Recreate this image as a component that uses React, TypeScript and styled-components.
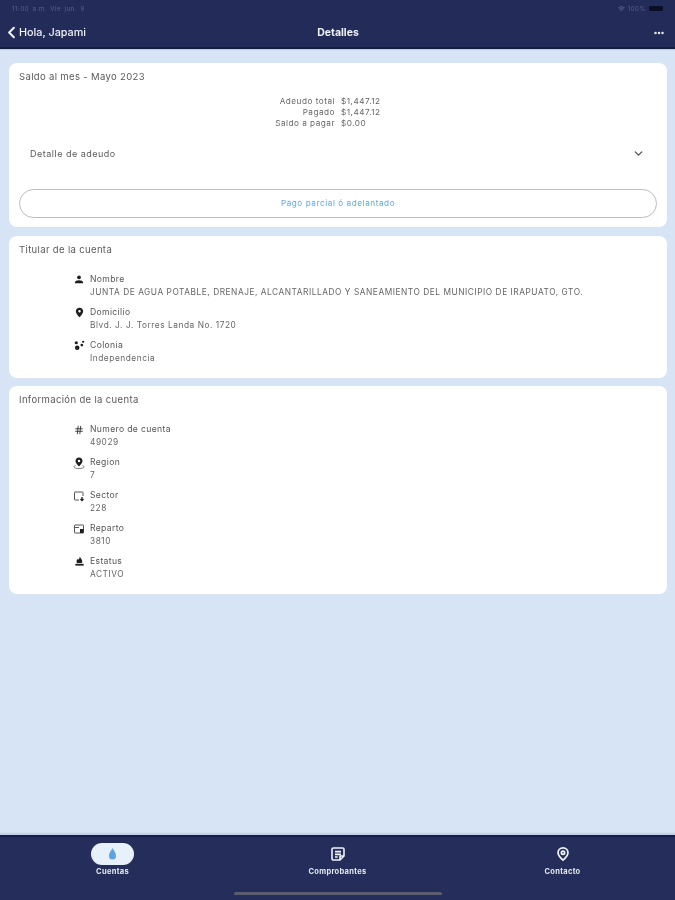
import React from 'react';
import styled, { createGlobalStyle } from 'styled-components';
import { ChevronDown, ChevronLeft, Ellipsis, Hash, Wifi } from 'lucide-react';

const GlobalStyle = createGlobalStyle`
  html, body {
    margin: 0;
    padding: 0;
    background: #d6e4f5;
  }
  * {
    box-sizing: border-box;
  }
`;

const PersonIcon = () => (
  <svg width="10" height="10" viewBox="0 0 24 24" fill="#1d1d1d">
    <circle cx="12" cy="8" r="4.5" />
    <path d="M2 21c0-4 5-6 10-6s10 2 10 6v1H2z" />
  </svg>
);

const PinIcon = () => (
  <svg width="11" height="11" viewBox="0 0 24 24" fill="#1d1d1d">
    <path d="M12 1.5c-4.600 0-8 3.500-8 8 0 5.500 8 13 8 13s8-7.500 8-13c0-4.500-3.400-8-8-8zm0 10.500a2.700 2.700 0 1 1 0-5.400 2.700 2.700 0 0 1 0 5.400z" />
  </svg>
);

const ScatterIcon = () => (
  <svg width="11" height="11" viewBox="0 0 24 24" fill="#1d1d1d">
    <circle cx="7" cy="17" r="5" />
    <circle cx="5" cy="6" r="3.500" />
    <circle cx="17" cy="11" r="3" />
    <circle cx="20" cy="4" r="2.500" />
  </svg>
);

const RegionIcon = () => (
  <svg width="12" height="12" viewBox="0 0 24 24" fill="#1d1d1d">
    <path d="M12 1c-4 0-7 3-7 7 0 4.500 7 11 7 11s7-6.500 7-11c0-4-3-7-7-7zm0 9.500a2.500 2.500 0 1 1 0-5 2.500 2.500 0 0 1 0 5z" />
    <path d="M5 17c-2 .8-3 1.700-3 2.800C2 22 7 23 12 23s10-1 10-3.200c0-1.100-1-2-3-2.800" fill="none" stroke="#555" strokeWidth="1.500" />
  </svg>
);

const SectorIcon = () => (
  <svg width="12" height="12" viewBox="0 0 24 24" fill="none" stroke="#444" strokeWidth="1.800">
    <path d="M12 20H4a1 1 0 0 1-1-1V5a1 1 0 0 1 1-1h15a1 1 0 0 1 1 1v7" />
    <path d="M18 14v7M15 18l3 3 3-3" stroke="#1d1d1d" strokeWidth="2.500" />
  </svg>
);

const RepartoIcon = () => (
  <svg width="12" height="12" viewBox="0 0 24 24" fill="none" stroke="#444" strokeWidth="1.800">
    <path d="M4 4h16a1 1 0 0 1 1 1v14a1 1 0 0 1-1 1H4a1 1 0 0 1-1-1V5a1 1 0 0 1 1-1z" />
    <path d="M3 9h9" />
    <rect x="14" y="12" width="7" height="8" fill="#1d1d1d" stroke="none" />
  </svg>
);

const StatusIcon = () => (
  <svg width="11" height="11" viewBox="0 0 24 24" fill="#1d1d1d">
    <path d="M13 1c.5 3.500 5 6 5 11 0 1.500-.6 2.500-1.500 3.500H7c-1-1-1.500-2-1.500-3.500 0-3 2-4 3-6 .5 1 1 1.500 2 2 .5-2 1.500-4.500 2.500-7z" />
    <path d="M3 17h18v4H3z" />
  </svg>
);

const DropIcon = () => (
  <svg width="13" height="14" viewBox="0 0 24 24" fill="#5ca4e0">
    <path d="M12 1c2.500 5 6.500 9 6.500 14.500a6.500 6.500 0 0 1-13 0C5.500 10 9.500 6 12 1z" />
  </svg>
);

const ReceiptIcon = () => (
  <svg width="16" height="16" viewBox="0 0 24 24" fill="none" stroke="#eef3fb" strokeWidth="2.400" strokeLinejoin="round">
    <path d="M5 3h14a2 2 0 0 1 2 2v10l-6 6H5a2 2 0 0 1-2-2V5a2 2 0 0 1 2-2z" />
    <path d="M7.500 8.500h9M7.500 12.500h9M7.500 16.500h4" />
    <path d="M15 21v-6h6" />
  </svg>
);

const ContactPinIcon = () => (
  <svg width="14" height="16" viewBox="0 0 24 26" fill="none" stroke="#eef3fb" strokeWidth="3">
    <path d="M12 2.500c-5 0-8.500 3.700-8.500 8.500 0 5.500 8.500 12.500 8.500 12.500S20.500 16.500 20.500 11c0-4.800-3.500-8.500-8.500-8.500z" />
    <circle cx="12" cy="11" r="2.800" />
  </svg>
);

const Page = styled.div`
  width: 675px;
  height: 900px;
  display: flex;
  flex-direction: column;
  background: #d6e4f5;
  font-family: Inter, "Liberation Sans", sans-serif;
  overflow: hidden;
  filter: blur(0.35px);
`;

const Header = styled.header`
  height: 49px;
  flex: none;
  background: #232c58;
  border-bottom: 2px solid #141c3f;
  box-shadow: 0 1px 1px #bccbe2;
`;

const StatusBar = styled.div`
  height: 17px;
  padding: 0 6px 0 12px;
  display: flex;
  align-items: center;
  justify-content: space-between;
  font-size: 6px;
  letter-spacing: 0.6px;
  color: #59618a;
`;

const StatusTime = styled.span`
  word-spacing: 1px;
`;

const StatusRight = styled.div`
  display: flex;
  align-items: center;
  gap: 3px;
`;

const Battery = styled.span`
  width: 14px;
  height: 5px;
  border-radius: 1px;
  background: #0b0f24;
  margin-right: 6px;
`;

const NavBar = styled.div`
  height: 30px;
  padding: 1px 10px 0 2px;
  display: grid;
  grid-template-columns: 1fr auto 1fr;
  align-items: center;
  color: #eef1f8;
`;

const BackLink = styled.div`
  display: flex;
  align-items: center;
  font-size: 10.800px;
  font-weight: 500;
  svg {
    margin-right: -2px;
  }
`;

const NavTitle = styled.div`
  font-size: 10.500px;
  font-weight: 700;
  padding-left: 9px;
`;

const NavAction = styled.div`
  justify-self: end;
  display: flex;
`;

const Content = styled.main`
  flex: 1;
  padding: 14px 8px 0 9px;
  display: flex;
  flex-direction: column;
  gap: 8.500px;
`;

const Card = styled.section<{ $height: number }>`
  background: #fff;
  border-radius: 8px;
  padding: 8px 10px 0;
  height: ${({ $height }) => $height}px;
  color: #555;
`;

const CardTitle = styled.h2`
  margin: 0;
  font-size: 9.500px;
  line-height: 12px;
  letter-spacing: 0.35px;
  font-weight: 400;
  color: #5a5a5a;
`;

const Totals = styled.div`
  margin-top: 13px;
  display: grid;
  grid-template-columns: 1fr 1fr;
  column-gap: 6px;
  font-size: 8.200px;
  line-height: 11.200px;
  letter-spacing: 0.5px;
  color: #666;
`;

const TotalLabel = styled.span`
  text-align: right;
`;

const Expander = styled.div`
  margin-top: 17px;
  padding: 0 12px 0 11px;
  height: 14px;
  display: flex;
  align-items: center;
  justify-content: space-between;
  font-size: 9px;
  letter-spacing: 0.5px;
  color: #5a5a5a;
`;

const PartialButton = styled.button`
  display: block;
  width: 100%;
  height: 29px;
  margin-top: 28px;
  background: #fff;
  border: 1px solid #bdbdbd;
  border-radius: 15px;
  font-family: inherit;
  font-size: 8.200px;
  letter-spacing: 0.55px;
  color: #6ba4d8;
`;

const InfoList = styled.div`
  margin-top: 17px;
  padding-left: 53px;
  display: flex;
  flex-direction: column;
  gap: 7px;
`;

const InfoRow = styled.div`
  display: grid;
  grid-template-columns: 14px 1fr;
  column-gap: 4px;
`;

const InfoIcon = styled.div`
  display: flex;
  justify-content: center;
  height: 13px;
  align-items: center;
`;

const InfoLabel = styled.div`
  font-size: 8.600px;
  line-height: 13px;
  letter-spacing: 0.35px;
  color: #555;
`;

const InfoValue = styled.div`
  grid-column: 2;
  font-size: 8.300px;
  line-height: 13px;
  letter-spacing: 0.55px;
  color: #666;
`;

const TabBar = styled.nav`
  height: 65px;
  flex: none;
  position: relative;
  background: #252e5a;
  border-top: 2px solid #141c4a;
  box-shadow: 0 -2px 1px #c3d1e6;
  display: grid;
  grid-template-columns: 225px 225px 225px;
`;

const Tab = styled.div`
  padding-top: 6px;
  display: flex;
  flex-direction: column;
  align-items: center;
  font-size: 7.500px;
  font-weight: 700;
  letter-spacing: 0.3px;
  color: #e4e9f4;
`;

const TabIcon = styled.div<{ $active?: boolean }>`
  width: 43px;
  height: 22px;
  border-radius: 11px;
  display: flex;
  align-items: center;
  justify-content: center;
  background: ${({ $active }) => ($active ? '#e8f0fb' : 'transparent')};
  margin-bottom: 2px;
`;

const HomeIndicator = styled.div`
  position: absolute;
  left: 234px;
  bottom: 5px;
  width: 208px;
  height: 3px;
  border-radius: 2px;
  background: #5e5c66;
`;

const titular = [
  { icon: <PersonIcon />, label: 'Nombre', value: 'JUNTA DE AGUA POTABLE, DRENAJE, ALCANTARILLADO Y SANEAMIENTO DEL MUNICIPIO DE IRAPUATO, GTO.' },
  { icon: <PinIcon />, label: 'Domicilio', value: 'Blvd. J. J. Torres Landa No. 1720' },
  { icon: <ScatterIcon />, label: 'Colonia', value: 'Independencia' },
];

const cuenta = [
  { icon: <Hash size={10} color="#333" strokeWidth={2.2} />, label: 'Numero de cuenta', value: '49029' },
  { icon: <RegionIcon />, label: 'Region', value: '7' },
  { icon: <SectorIcon />, label: 'Sector', value: '228' },
  { icon: <RepartoIcon />, label: 'Reparto', value: '3810' },
  { icon: <StatusIcon />, label: 'Estatus', value: 'ACTIVO' },
];

const Info = ({ rows }: { rows: typeof titular }) => (
  <InfoList>
    {rows.map((row) => (
      <InfoRow key={row.label}>
        <InfoIcon>{row.icon}</InfoIcon>
        <InfoLabel>{row.label}</InfoLabel>
        <InfoValue>{row.value}</InfoValue>
      </InfoRow>
    ))}
  </InfoList>
);

const App = () => {
  return (
    <Page>
      <GlobalStyle />
      <Header>
        <StatusBar>
          <StatusTime>11:00 a.m.  Vie jun. 9</StatusTime>
          <StatusRight>
            <Wifi size={7} strokeWidth={3} color="#59618a" />
            <span>100%</span>
            <Battery />
          </StatusRight>
        </StatusBar>
        <NavBar>
          <BackLink>
            <ChevronLeft size={19} strokeWidth={2.6} />
            Hola, Japami
          </BackLink>
          <NavTitle>Detalles</NavTitle>
          <NavAction>
            <Ellipsis size={12} strokeWidth={3} />
          </NavAction>
        </NavBar>
      </Header>
      <Content>
        <Card $height={164}>
          <CardTitle>Saldo al mes - Mayo 2023</CardTitle>
          <Totals>
            <TotalLabel>Adeudo total</TotalLabel>
            <span>$1,447.12</span>
            <TotalLabel>Pagado</TotalLabel>
            <span>$1,447.12</span>
            <TotalLabel>Saldo a pagar</TotalLabel>
            <span>$0.00</span>
          </Totals>
          <Expander>
            Detalle de adeudo
            <ChevronDown size={13} strokeWidth={2.5} color="#555" />
          </Expander>
          <PartialButton>Pago parcial ó adelantado</PartialButton>
        </Card>
        <Card $height={142}>
          <CardTitle>Titular de la cuenta</CardTitle>
          <Info rows={titular} />
        </Card>
        <Card $height={208}>
          <CardTitle>Información de la cuenta</CardTitle>
          <Info rows={cuenta} />
        </Card>
      </Content>
      <TabBar>
        <Tab>
          <TabIcon $active>
            <DropIcon />
          </TabIcon>
          Cuentas
        </Tab>
        <Tab>
          <TabIcon>
            <ReceiptIcon />
          </TabIcon>
          Comprobantes
        </Tab>
        <Tab>
          <TabIcon>
            <ContactPinIcon />
          </TabIcon>
          Contacto
        </Tab>
        <HomeIndicator />
      </TabBar>
    </Page>
  );
};

export default App;
